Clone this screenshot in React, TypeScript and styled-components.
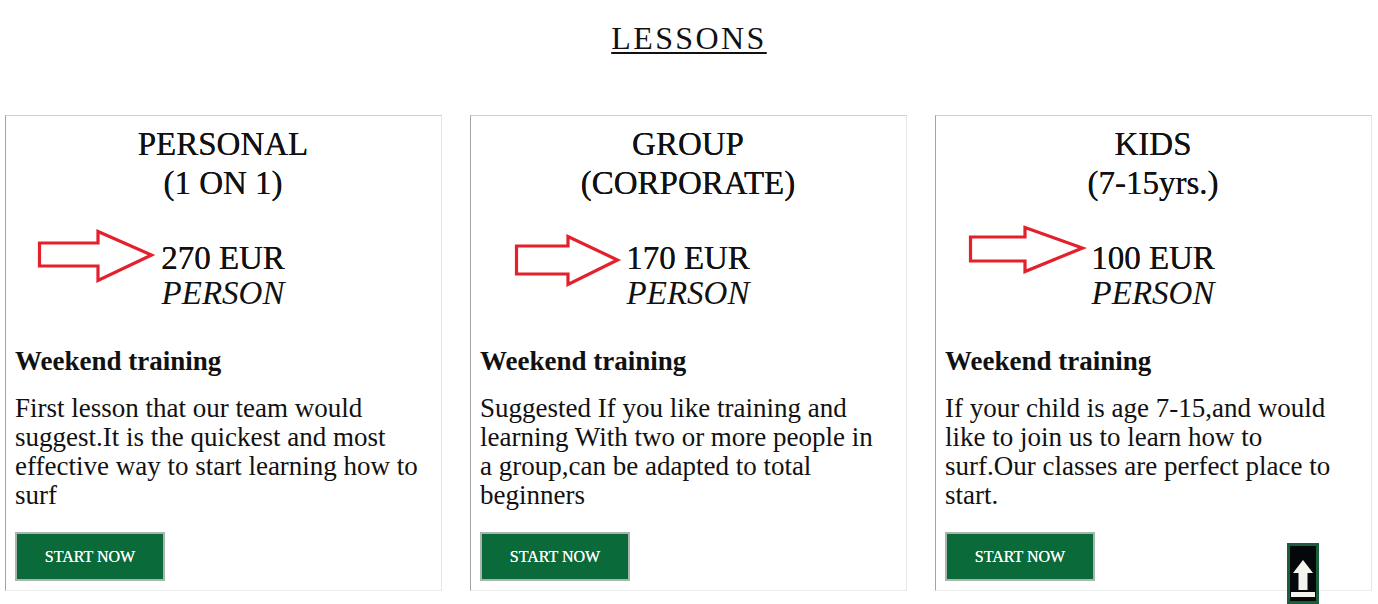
import React from "react";
import styled, { createGlobalStyle } from "styled-components";

const GlobalStyle = createGlobalStyle`
  html, body { margin: 0; padding: 0; background: #ffffff; }
  body { font-family: "Liberation Serif", "Times New Roman", serif; color: #111111; }
`;

const Page = styled.div`
  width: 1378px;
  height: 604px;
  overflow: hidden;
  position: relative;
  background: #fff;
`;

const Heading = styled.h1`
  margin: 18px 0 0;
  height: 40px;
  line-height: 40px;
  text-align: center;
  font-size: 32px;
  font-weight: 400;
  letter-spacing: 2.4px;
  text-decoration: underline;
  text-decoration-thickness: 2px;
  text-underline-offset: 3px;
`;

const Grid = styled.div`
  margin-top: 57px;
  display: grid;
  grid-template-columns: repeat(3, 437px);
  column-gap: 28px;
  padding: 0 0 0 5px;
`;

const Card = styled.div`
  position: relative;
  box-sizing: border-box;
  height: 476px;
  border-top: 1px solid #cfcfcf;
  border-left: 1px solid #a4a4a4;
  border-right: 1px solid #e6e6e6;
  border-bottom: 1px solid #ececec;
  padding: 9px 10px 0 9px;
  display: flex;
  flex-direction: column;
`;

const Title = styled.h2`
  margin: 0;
  font-size: 33px;
  line-height: 39px;
  font-weight: 400;
  text-align: center;
  text-shadow: 0 0 0.4px #111;
`;

const Price = styled.div`
  margin-top: 38px;
  text-align: center;
  font-size: 33px;
  line-height: 35px;
  text-shadow: 0 0 0.4px #111;
`;

const Per = styled.div`
  font-style: italic;
  text-shadow: none;
`;

const Sub = styled.h3`
  margin: 34px 0 0;
  font-size: 27px;
  line-height: 32px;
  font-weight: 700;
`;

const Desc = styled.p`
  margin: 17px 0 0;
  font-size: 27px;
  line-height: 29px;
  min-height: 116px;
`;

const Line = styled.span`
  display: block;
  white-space: nowrap;
`;

const Button = styled.button`
  margin-top: 22px;
  width: 150px;
  height: 49px;
  box-sizing: border-box;
  background: #0b6a3a;
  border: 2px solid #a9b6ad;
  color: #ffffff;
  font-family: "Liberation Serif", "Times New Roman", serif;
  font-size: 16px;
  text-shadow: 0 0 0.3px #fff;
  cursor: pointer;
  padding: 0;
`;

const ArrowSvg = styled.svg<{ $left: number; $top: number }>`
  position: absolute;
  left: ${(p) => p.$left}px;
  top: ${(p) => p.$top}px;
  overflow: visible;
`;

const BackTop = styled.button`
  position: fixed;
  left: 1287px;
  top: 543px;
  width: 32px;
  height: 61px;
  box-sizing: border-box;
  background: #05080a;
  border: 3px solid #1b5e3b;
  padding: 0;
  display: flex;
  align-items: flex-start;
  justify-content: center;
`;

type ArrowProps = {
  left: number;
  top: number;
  w: number;
  h: number;
  s1: number;
  s2: number;
  hb: number;
  tip: number;
};

const Arrow = ({ left, top, w, h, s1, s2, hb, tip }: ArrowProps) => {
  const pts = [
    [1.5, s1],
    [hb, s1],
    [hb, 1.5],
    [w - 1.5, tip],
    [hb, h - 1.5],
    [hb, s2],
    [1.5, s2],
  ]
    .map((p) => p.join(","))
    .join(" ");
  return (
    <ArrowSvg $left={left} $top={top} width={w} height={h} viewBox={`0 0 ${w} ${h}`}>
      <polygon points={pts} fill="#ffffff" stroke="#e3202b" strokeWidth={3.2} strokeLinejoin="miter" />
    </ArrowSvg>
  );
};

const cards = [
  {
    title: ["PERSONAL", "(1 ON 1)"],
    price: "270 EUR",
    desc: [
      "First lesson that our team would",
      "suggest.It is the quickest and most",
      "effective way to start learning how to",
      "surf",
    ],
    arrow: { left: 32, top: 114, w: 115, h: 52, s1: 13, s2: 36, hb: 60, tip: 25 },
  },
  {
    title: ["GROUP", "(CORPORATE)"],
    price: "170 EUR",
    desc: [
      "Suggested If you like training and",
      "learning With two or more people in",
      "a group,can be adapted to total",
      "beginners",
    ],
    arrow: { left: 44, top: 119, w: 104, h: 51, s1: 11, s2: 39, hb: 53, tip: 25 },
  },
  {
    title: ["KIDS", "(7-15yrs.)"],
    price: "100 EUR",
    desc: [
      "If your child is age 7-15,and would",
      "like to join us to learn how to",
      "surf.Our classes are perfect place to",
      "start.",
    ],
    arrow: { left: 33, top: 110, w: 115, h: 47, s1: 11, s2: 35, hb: 56, tip: 22 },
  },
];

export default function App() {
  return (
    <Page>
      <GlobalStyle />
      <Heading>LESSONS</Heading>
      <Grid>
        {cards.map((c) => (
          <Card key={c.price}>
            <Title>
              {c.title[0]}
              <br />
              {c.title[1]}
            </Title>
            <Price>
              <div>{c.price}</div>
              <Per>PERSON</Per>
            </Price>
            <Sub>Weekend training</Sub>
            <Desc>
              {c.desc.map((l) => (
                <Line key={l}>{l}</Line>
              ))}
            </Desc>
            <div>
              <Button>START NOW</Button>
            </div>
            <Arrow {...c.arrow} />
          </Card>
        ))}
      </Grid>
      <BackTop aria-label="Back to top">
        <svg width="26" height="55" viewBox="0 0 26 55">
          <polygon points="13,14 23,27 17.5,27 17.5,44 8.5,44 8.5,27 3,27" fill="#f4f4ee" />
          <rect x="1" y="46" width="24" height="5" fill="#f4f4ee" />
        </svg>
      </BackTop>
    </Page>
  );
}
